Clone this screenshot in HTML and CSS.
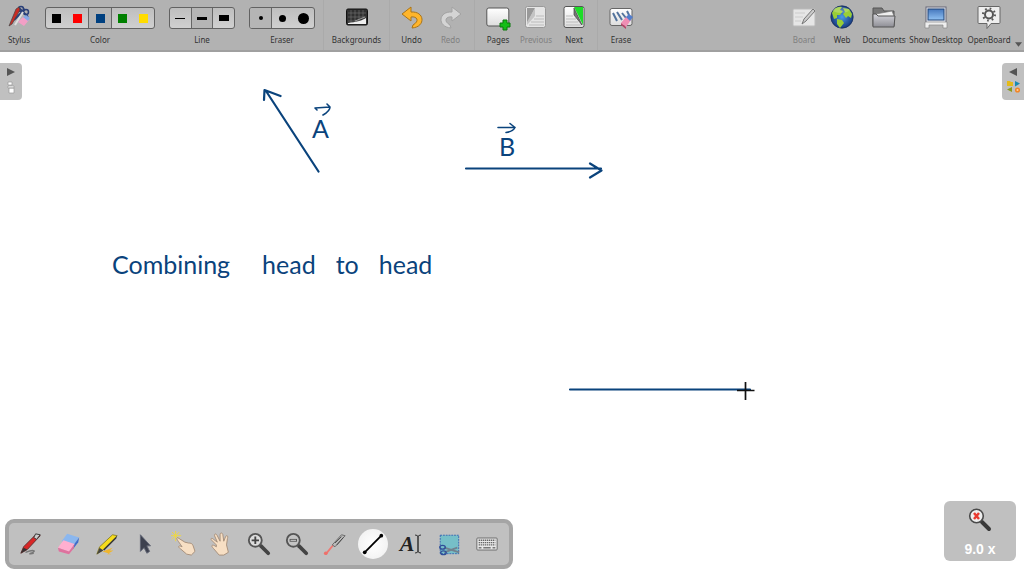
FILE: index.html
```html
<!DOCTYPE html>
<html lang="en">
<head>
<meta charset="utf-8">
<title>OpenBoard</title>
<link rel="stylesheet" href="styles.css">
</head>
<body>
<header class="toolbar">
  <button class="tool"><svg viewBox="0 0 24 24"><path d="M7 15 18 4M12 3l9 9" stroke="#293f78" stroke-width="2"/><circle cx="14" cy="4" r="2.5" fill="none" stroke="#293f78" stroke-width="1.5"/><circle cx="19" cy="7" r="2.5" fill="none" stroke="#293f78" stroke-width="1.5"/><path d="M2 21 9 4l3-2 1 3-8 14z" fill="#c92c24" stroke="#444" stroke-width=".7"/><path d="m8 20 8-13" stroke="#ddd" stroke-width="2"/><path d="m11 17 5-5 6 3-5 6z" fill="#f29fc6"/><path d="m16 12 3-2 4 3-2 3z" fill="#85a8e6"/></svg><span>Stylus</span></button>
  <div class="group colors" role="group" aria-label="Color"><div class="choices">
    <button aria-label="Black"><i class="swatch black"></i></button><button aria-label="Red"><i class="swatch red"></i></button><button class="on" aria-label="Blue"><i class="swatch blue"></i></button><button aria-label="Green"><i class="swatch green"></i></button><button aria-label="Yellow"><i class="swatch yellow"></i></button>
  </div><span>Color</span></div>
  <div class="group" role="group" aria-label="Line"><div class="choices">
    <button aria-label="Fine line"><i class="line fine"></i></button><button class="on" aria-label="Medium line"><i class="line medium"></i></button><button aria-label="Thick line"><i class="line thick"></i></button>
  </div><span>Line</span></div>
  <div class="group" role="group" aria-label="Eraser"><div class="choices">
    <button class="on" aria-label="Small eraser"><i class="dot small"></i></button><button aria-label="Medium eraser"><i class="dot mid"></i></button><button aria-label="Large eraser"><i class="dot large"></i></button>
  </div><span>Eraser</span></div>
  <div class="section first"><button class="tool wide"><svg viewBox="0 0 24 24"><rect x="1.5" y="4" width="21" height="16" rx="1.5" fill="#303030" stroke="#111"/><path d="M3 8h18M3 12h18M3 16h18M6 5v14M10 5v14M14 5v14M18 5v14" stroke="#777" stroke-width=".6"/><path d="M3 18c8-1 13-2 18-5v6H3z" fill="#eee"/><path d="m10 16 10-4" stroke="#999"/></svg><span>Backgrounds</span></button></div>
  <div class="section pair"><button class="tool"><svg viewBox="0 0 24 24"><path d="M11 2 2 9l9 7v-4c6-1 9 4 2 8l-1 3c14-1 13-17-1-16z" fill="#ffb52b" stroke="#a97418"/></svg><span>Undo</span></button>
  <button class="tool" disabled><svg viewBox="0 0 24 24"><path d="M13 2l9 7-9 7v-4c-6-1-9 4-2 8l1 3C-2 22-1 6 13 7z" fill="#d4d4d4" stroke="#a2a2a2"/></svg><span>Redo</span></button></div>
  <div class="section"><button class="tool"><svg viewBox="0 0 24 24"><rect x=".8" y="3" width="22" height="18" rx="2" fill="url(#page)" stroke="#555"/><path d="M17 15h4v3h3v4h-3v3h-4v-3h-3v-4h3z" fill="#14bd17" stroke="#08790a"/></svg><span>Pages</span></button>
  <button class="tool" disabled><svg viewBox="0 0 24 24"><rect x="1.500" y="1.500" width="20" height="21" rx="2" fill="#e5e5e5" stroke="#999"/><path d="M3 3h8L3 19z" fill="#999"/><path d="M11 3v8l-8 9V17z" fill="#c4c4c4"/><path d="M12 11h8M10 14h10M7 17h13M5 20h15" stroke="#bbb"/></svg><span>Previous</span></button>
  <button class="tool"><svg viewBox="0 0 24 24"><rect x="2" y="1.500" width="20" height="21" rx="2" fill="url(#page)" stroke="#555"/><path d="M12 2h9v18z" fill="#1ddd28"/><path d="m12 3 0 7 8 10z" fill="#777" stroke="#444" stroke-width=".7"/><path d="M4 11h7M4 14h10M4 17h12M4 20h15" stroke="#bbb"/></svg><span>Next</span></button></div>
  <div class="section"><button class="tool"><svg viewBox="0 0 24 24"><rect x="1" y="3.500" width="22" height="17" rx="2" fill="url(#page)" stroke="#666"/><path d="m4 8 4 8M8 7l5 8M13 8l4 5M18 6l2 4" stroke="#53739d" stroke-width="2"/><path d="m12 18 5-6 5 3-5 7z" fill="#ef8eb4"/><path d="m17 12 3-3 4 3-3 4z" fill="#537dcb"/><path d="m12 18 5 4v2l-5-4z" fill="#b64267"/></svg><span>Erase</span></button></div>
  <nav class="modes">
    <button class="tool" disabled><svg viewBox="0 0 24 24"><rect x="1" y="4" width="22" height="17" rx="1" fill="#e6e6e6" stroke="#bbb"/><path d="M3 8h10M3 12h8M3 16h6" stroke="#ccc"/><path d="m10 19 2-5L21 4l2 2-9 10z" fill="#ccc" stroke="#777"/></svg><span>Board</span></button>
    <button class="tool"><svg viewBox="0 0 24 24"><circle cx="12" cy="12" r="11.200" fill="url(#sea)" stroke="#152b59" stroke-width=".7"/><path d="M2 8c2-5 6-7 10-6l-2 3 3 1-3 4-3 0 0 3-3 1zM13 3l6 1 3 5-1 4-3-2-2 2-3-4 2-2zM7 14l5 1 2 3-4 5-3-4z" fill="#9ace36"/><ellipse cx="11" cy="5" rx="8" ry="3" fill="#fff" opacity=".2"/></svg><span>Web</span></button>
    <button class="tool docs"><svg viewBox="0 0 24 24"><path d="M1 21V3h9l2 3h10v15z" fill="#777" stroke="#555"/><path d="M4 9 20 6l2 5v9H4z" fill="#eee" stroke="#777" stroke-width=".7"/><path d="M1 22V9h3l2 2h17l-1 11z" fill="url(#folder)" stroke="#555"/></svg><span>Documents</span></button>
    <button class="tool desk"><svg viewBox="0 0 24 24"><rect x="2" y="2" width="20" height="16" fill="#e6e9ef" stroke="#667"/><rect x="4" y="4" width="16" height="11" fill="url(#screen)" stroke="#204577"/><path d="M1 17h22v6h-4v-3H5v3H1z" fill="#eee" stroke="#888" stroke-width=".7"/></svg><span>Show Desktop</span></button>
    <button class="tool app"><svg viewBox="0 0 24 24"><path d="M2 1.500h20q1 0 1 1v15q0 1-1 1h-8l-4 5v-5H2q-1 0-1-1v-15q0-1 1-1z" fill="#eee" stroke="#666"/><circle cx="12" cy="9.500" r="4" fill="none" stroke="#555" stroke-width="2"/><circle cx="12" cy="9.500" r="6" fill="none" stroke="#555" stroke-width="2" stroke-dasharray="1.700 3"/></svg><span>OpenBoard</span></button>
    <button class="more" aria-label="More"><svg viewBox="0 0 8 5"><path d="M0 0h8L4 5z" fill="#555"/></svg></button>
  </nav>
</header>
<main class="board">
  <svg class="ink" viewBox="0 51 1024 525" aria-hidden="true">
    <defs>
      <linearGradient id="page" x2="0" y2="1"><stop stop-color="#fff"/><stop offset="1" stop-color="#ddd"/></linearGradient>
      <linearGradient id="folder" x2="0" y2="1"><stop stop-color="#d4d4da"/><stop offset="1" stop-color="#8e8e95"/></linearGradient>
      <linearGradient id="screen" x2="0" y2="1"><stop stop-color="#4577bd"/><stop offset="1" stop-color="#91c2f3"/></linearGradient>
      <radialGradient id="sea"><stop stop-color="#4a9ae8"/><stop offset="1" stop-color="#173a7e"/></radialGradient>
    </defs>
    <g fill="none" stroke="#0a437c" stroke-width="2.200" stroke-linecap="round" stroke-linejoin="round">
      <path d="M318.500 171.500 266 91M264 100l.5-10 16 6M466 168.500H601M590 163.500l11.500 7-11.500 7M570 389.500H750"/>
      <path d="M317 110l-2-2 15-1-3-3M330 107q0 4-7 8M498 127.500h17l-5-4M515 127.500q-2 4-9 5" stroke-width="1.600"/>
    </g>
    <path d="M737 390.500h17.500M745.500 382v18" stroke="#111" stroke-width="1.700"/>
  </svg>
  <span class="note vector-a">A</span><span class="note vector-b">B</span>
  <p class="note phrase"><span>Combining</span><span>head</span><span>to</span><span>head</span></p>
  <button class="tab left" aria-label="Page list"><svg viewBox="0 0 22 37"><path d="m7 5 8 4-8 4z" fill="#555"/><path d="M8 19h4v3H8zM8 23h6v2H8zM9 25h5v5H9z" fill="#fff" stroke="#999" stroke-width=".7"/></svg></button>
  <button class="tab right" aria-label="Library"><svg viewBox="0 0 22 37"><path d="m15 5-8 4 8 4z" fill="#555"/><path d="M5 18h3l1 1h2v4H5z" fill="#e5bb19"/><path d="m13 18 5 2.500-5 3z" fill="#188bb3"/><path d="m10 24-5 2.500 5 2.500z" fill="#8a9a1b"/><circle cx="15.500" cy="27" r="1.800" fill="#ffd19a" stroke="#f18526" stroke-width="1.500"/></svg></button>
  <div class="palette" role="toolbar" aria-label="Drawing tools">
    <button aria-label="Pen"><svg viewBox="0 0 26 26"><path d="M7 22c8-3 12-2 8 0s-5 2 1 1" fill="none" stroke="#777" stroke-width="1.500"/><path d="m2 23 3-7L18 3l5 1L9 19z" fill="#d92727" stroke="#603030"/><path d="m18 2 5 1-4 5-3-2z" fill="#ccc" stroke="#333"/><path d="m2 23 3-6 4 2z" fill="#333"/></svg></button>
    <button aria-label="Eraser"><svg viewBox="0 0 26 26"><path d="m11 2 13 4-6 8-13-4z" fill="#8bb7ef"/><path d="m24 6-1 5-6 8 1-5z" fill="#3e6dcc"/><path d="m7 9 12 4-6 8-12-4z" fill="#ffafd0"/><path d="m1 17 12 4v3L2 21zM19 13l-6 8v3l5-6z" fill="#df729e"/></svg></button>
    <button aria-label="Marker"><svg viewBox="0 0 26 26"><path d="m8 21 11-4-3 3h4l-7 4 5 0" fill="#efb52d"/><path d="m2 24 3-8L19 3l5 1L8 20z" fill="#f6dc1c" stroke="#786c18" stroke-width=".8"/><path d="m9 19 15-15-1 3L10 20z" fill="#333"/><path d="m2 24 3-7 4 3z" fill="#444"/></svg></button>
    <button aria-label="Select"><svg viewBox="0 0 26 26"><path d="m8 3 0 18 4-4 3 6 3-2-3-6h4z" fill="#3d414f" stroke="#626675"/></svg></button>
    <button aria-label="Interact"><svg viewBox="0 0 26 26"><path d="M5-1v11M0 4h11M1 0l8 8M9 0 1 8" stroke="#f1d83c"/><path d="M7 6c-2 1 1 4 5 10-4-2-5 0-2 2l7 6 5 1 4-4-2-6c-1-3-3-3-5-3l-4-1z" fill="#f7dfc4" stroke="#a58d78"/></svg></button>
    <button aria-label="Scroll"><svg viewBox="0 0 26 26"><path d="m8 14-5-5c-2-2 0-3 2-1l4 3-3-7c0-3 2-2 3 0l3 6V3c0-3 3-2 3 0l1 7 2-5c1-2 3-1 2 2l-1 7 2 8-5 3h-5L5 18c-4-4-1-5 3-2z" fill="#f7dfc4" stroke="#a58d78"/></svg></button>
    <button aria-label="Zoom in"><svg viewBox="0 0 26 26"><path d="m15 15 8 8" stroke="#444" stroke-width="4" stroke-linecap="round"/><circle cx="9" cy="9" r="7" fill="#ddd" stroke="#555" stroke-width="2"/><path d="M5 9h8M9 5v8" stroke="#444" stroke-width="2"/></svg></button>
    <button aria-label="Zoom out"><svg viewBox="0 0 26 26"><path d="m15 15 8 8" stroke="#444" stroke-width="4" stroke-linecap="round"/><circle cx="9" cy="9" r="7" fill="#c4c4c4" stroke="#555" stroke-width="2"/><path d="M5 9h8" stroke="#555" stroke-width="3"/><path d="M6 9h6" stroke="#ddd"/></svg></button>
    <button aria-label="Laser pointer"><svg viewBox="0 0 26 26"><path d="m3 24 9-11" stroke="#ee7771" stroke-width="2"/><circle cx="3" cy="23" r="2" fill="#ee706a"/><path d="m10 14 10-11 4 1-11 12z" fill="#bbb" stroke="#666"/><path d="m13 12 7-7M15 14l7-8" stroke="#444"/></svg></button>
    <button class="active" aria-label="Draw line" aria-pressed="true"><svg viewBox="0 0 26 26"><path d="m4 22 18-18" stroke="#000" stroke-width="2"/><circle cx="4" cy="22" r="2" /><circle cx="22" cy="4" r="2"/></svg></button>
    <button class="text-tool" aria-label="Text"><b>A</b><svg viewBox="0 0 8 20"><path d="M1 1q3 0 3 2v14q0 2-3 2M7 1Q4 1 4 3v14q0 2 3 2" fill="none" stroke="#333"/></svg></button>
    <button aria-label="Capture"><svg viewBox="0 0 26 26"><rect x="3.500" y="3.500" width="20" height="20" fill="#76bfc8" stroke="#3466b2" stroke-dasharray="2 1"/><path d="m8 17 16 5M8 22l14-5" stroke="#72818e" stroke-width="2"/><ellipse cx="6" cy="16.500" rx="3" ry="2" fill="none" stroke="#304f98" stroke-width="1.500"/><ellipse cx="7" cy="22.500" rx="3" ry="2" fill="none" stroke="#304f98" stroke-width="1.500"/></svg></button>
    <button aria-label="Virtual keyboard"><svg viewBox="0 0 26 26"><rect x="2" y="6.500" width="22" height="13" rx="1" fill="#e7e7e7" stroke="#666"/><path d="M4 9h18M4 11.500h18M4 14h18" stroke="#666" stroke-width="1.500" stroke-dasharray="1.500 .7"/><path d="M4 17h3m2 0h8m2 0h3" stroke="#777" stroke-width="1.500"/></svg></button>
  </div>
  <div class="zoom"><svg viewBox="0 0 26 26"><path d="m15 15 7 7" stroke="#383838" stroke-width="4" stroke-linecap="round"/><circle cx="9.500" cy="9" r="6.800" fill="#eee" stroke="#4a4a4a" stroke-width="1.600"/><path d="m7 6 5 6M12 6l-5 6" stroke="#e83a30" stroke-width="2.500"/></svg><strong>9.0 x</strong></div>
</main>
</body>
</html>
```
FILE: styles.css
```css
* { box-sizing: border-box; }
body {
  margin: 0;
  min-height: 100vh;
  display: flex;
  flex-direction: column;
  overflow: hidden;
  background: #fff;
  font-family: "Noto Sans", "Open Sans", sans-serif;
}
button {
  margin: 0;
  padding: 0;
  border: 0;
  background: none;
  color: inherit;
  font: inherit;
}
svg { display: block; overflow: visible; }
.toolbar {
  display: flex;
  height: 52px;
  padding-top: 5px;
  border-bottom: 2px solid #a0a0a0;
  background: #b2b2b2;
  color: #333;
  font-size: 8px;
  line-height: 12px;
  white-space: nowrap;
}
.tool {
  width: 38px;
  display: flex;
  flex-direction: column;
  align-items: center;
  gap: 5px;
}
.tool svg { width: 24px; height: 24px; }
.tool:disabled { color: #808080; }
.group {
  width: 66px;
  margin-left: 14px;
  padding-top: 2px;
  display: flex;
  flex-direction: column;
  align-items: center;
  gap: 5px;
}
.colors { width: 110px; margin-left: 7px; }
.choices {
  width: 100%;
  height: 22px;
  display: flex;
  border: 1px solid #626262;
  border-radius: 3px;
  background: linear-gradient(#bebebe, #d0d0d0);
  overflow: hidden;
}
.choices button { flex: 1; display: grid; place-items: center; }
.choices .on { background: #b5b5b5; border: solid #666; border-width: 0 1px; }
.choices .on:first-child { border-left: 0; }
.swatch { width: 9px; height: 9px; }
.black { background: #000; }
.red { background: #f00; }
.blue { background: #004080; }
.green { background: #008000; }
.yellow { background: #ffdc00; }
.line { width: 10px; background: #000; }
.fine { height: 1px; }
.medium { height: 3px; }
.thick { height: 6px; }
.dot { border-radius: 50%; background: #000; }
.small { width: 4px; height: 4px; }
.mid { width: 7px; height: 7px; }
.large { width: 11px; height: 11px; }
.section {
  display: flex;
  padding: 0 4px;
  margin-top: -5px;
  padding-top: 5px;
  border-left: 1px solid #aaa;
}
.first { margin-left: 8px; padding-left: 0; padding-right: 0; }
.wide { width: 65px; }
.pair { padding-left: 2px; padding-right: 4px; }
.pair .tool { width: 39px; }
.modes { display: flex; margin-left: auto; }
.docs { width: 46px; }
.desk { width: 58px; }
.app { width: 48px; }
.more { width: 11px; padding: 33px 2px 0; }
.more svg { width: 7px; height: 5px; }
.board { position: relative; flex: 1; }
.ink { position: absolute; top: -1px; left: 0; width: 1024px; height: 525px; }
.note {
  position: absolute;
  margin: 0;
  color: #0a437c;
  font-family: Lato, sans-serif;
  font-weight: 400;
  font-size: 25px;
  line-height: 32px;
}
.vector-a { left: 312px; top: 60px; }
.vector-b { left: 499px; top: 78px; }
.phrase { left: 112px; top: 196px; display: flex; }
.phrase span:nth-child(2) { margin-left: 32px; }
.phrase span:nth-child(3) { margin-left: 20px; }
.phrase span:nth-child(4) { margin-left: 20px; }
.tab { position: absolute; top: 11px; width: 22px; height: 37px; background: #c0c0c0; }
.left { left: 0; border-radius: 0 4px 4px 0; }
.right { right: 0; border-radius: 4px 0 0 4px; }
.palette {
  position: absolute;
  left: 5px;
  bottom: 7px;
  display: flex;
  padding: 3px;
  border: 4px solid #a5a5a5;
  border-radius: 9px;
  background: #c0c0c0;
}
.palette button { width: 38px; height: 36px; display: grid; place-items: center; }
.palette svg { width: 24px; height: 24px; }
.palette .active { width: 30px; height: 30px; margin: 3px 4px; border-radius: 50%; background: radial-gradient(#fff, #eee); }
.palette .text-tool { display: flex; align-items: center; justify-content: center; }
.text-tool b { font: italic bold 22px/24px "Liberation Serif", serif; color: #222; }
.palette .text-tool svg { width: 8px; height: 20px; }
.zoom {
  position: absolute;
  right: 8px;
  bottom: 15px;
  width: 72px;
  padding: 6px 0 4px;
  display: flex;
  flex-direction: column;
  align-items: center;
  gap: 8px;
  border-radius: 6px;
  background: #c0c0c0;
  color: #fff;
  font: 14px/16px "Liberation Sans", sans-serif;
}
.zoom svg { width: 26px; height: 26px; }
```
